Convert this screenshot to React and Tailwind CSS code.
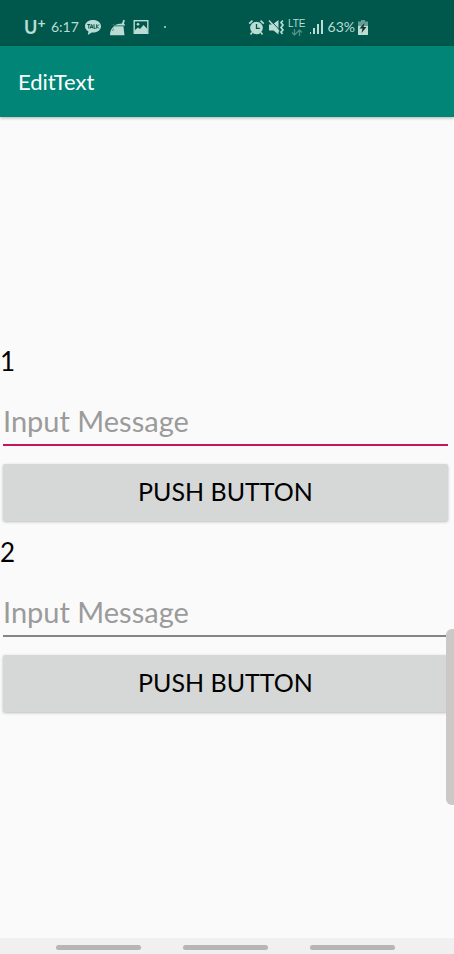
import React from 'react';

const TalkIcon = () => (
  <svg width="18" height="17" viewBox="0 0 18 17" aria-hidden="true">
    <path d="M9 1C4.400 1 1 3.700 1 7.300c0 2.300 1.400 4.100 3.500 5.200L3.800 16l3.900-2.500 1.300.1c4.600 0 8-2.700 8-6.300S13.600 1 9 1z" fill="#b9dcd5" />
    <path d="M3.300 5.500h3M4.800 5.500v4M6.200 9.500l1.400-4 1.400 4M6.700 8.300h1.800M10 5.300v4h1.700M12.700 5.300v4.200M15 5.500l-2 2 2 2" fill="none" stroke="#00574b" strokeWidth="1" />
  </svg>
);

const BroomIcon = () => (
  <svg width="17" height="17" viewBox="0 0 17 17" fill="#b9dcd5" aria-hidden="true">
    <path d="M3.500 5l2 1.200L9 5l4-.6L14.300.8l1.500.4-.9 4.100H16v1.200H5z" />
    <path d="M5 7.300h9.500l.5 5 .5 3.900H1c0-4 1.300-7 4-8.900z" />
    <path d="M4.500 9.500l-1 2.500" stroke="#00574b" strokeWidth=".6" />
  </svg>
);

const PhotoIcon = () => (
  <svg width="16" height="16" viewBox="0 0 16 16" aria-hidden="true">
    <rect x="1.200" y="1.700" width="13.600" height="12.600" fill="none" stroke="#b9dcd5" strokeWidth="1.400" />
    <circle cx="5" cy="5.300" r="1.300" fill="#b9dcd5" />
    <path d="M2 11l3-2.500 2 1.500 3.500-4L14 9.500V14H2z" fill="#b9dcd5" />
  </svg>
);

const AlarmIcon = () => (
  <svg width="17" height="17" viewBox="0 0 17 17" aria-hidden="true">
    <circle cx="8.500" cy="9" r="6.300" fill="#b9dcd5" />
    <path d="M1.200 4.600l3.300-3M15.800 4.600l-3.300-3M4 13.500l-1.500 2M13 13.500l1.500 2" stroke="#b9dcd5" strokeWidth="1.700" />
    <path d="M8.500 5v4.300h3.300" fill="none" stroke="#00574b" strokeWidth="1.300" />
  </svg>
);

const MuteIcon = () => (
  <svg width="17" height="17" viewBox="0 0 17 17" aria-hidden="true">
    <path d="M1 5.500h3.500L10.500 1v14.500L5.500 11.500H1z" fill="#b9dcd5" />
    <path d="M1.800.5l9.700 10.500" stroke="#00574b" strokeWidth="1" />
    <path d="M1 1.500l10 11" stroke="#b9dcd5" strokeWidth="1.500" />
    <path d="M15 1.500l-2 2 2 2.500-2 2.500 2 2.500-2 2 1.500 2" fill="none" stroke="#b9dcd5" strokeWidth="1.700" />
  </svg>
);

const DataArrows = () => (
  <svg width="12" height="7" viewBox="0 0 12 7" fill="none" stroke="#4c9184" strokeWidth="1.300" aria-hidden="true">
    <path d="M3.500 0v6M1 3.500L3.500 6 6 3.500M8.500 7V1M6 3.500L8.500 1 11 3.500" />
  </svg>
);

const SignalIcon = () => (
  <svg width="15" height="15" viewBox="0 0 15 15" fill="#b9dcd5" aria-hidden="true">
    <rect x="1" y="12" width="1" height="2" />
    <rect x="4" y="8" width="2" height="6" />
    <rect x="8" y="4" width="2" height="10" />
    <rect x="12" y="0" width="2" height="14" />
  </svg>
);

const BatteryIcon = () => (
  <svg width="10" height="15" viewBox="0 0 10 15" aria-hidden="true">
    <path d="M3 0h4v1.500h3V6H0V1.500h3z" fill="#669f95" />
    <path d="M0 6h10v9H0z" fill="#b9dcd5" />
    <path d="M6.500 3L1.500 8.500h3L3.500 13l5-6h-3z" fill="#12332e" />
  </svg>
);

const StatusBar = () => (
  <div className="h-[46px] shrink-0 flex items-center pt-2 pl-6 bg-[#00574b] text-[#b9dcd5] text-sm">
    <div className="flex items-center gap-[7px]">
      <span className="flex w-5 text-lg leading-5 font-bold">
        U<sup className="text-sm leading-3 top-0">+</sup>
      </span>
      <span className="w-[26px]">6:17</span>
      <TalkIcon />
      <BroomIcon />
      <PhotoIcon />
      <span className="ml-2 size-[2px] rounded-full bg-[#b9dcd5]" />
    </div>
    <div className="ml-auto mr-[86px] flex items-center gap-[3px]">
      <AlarmIcon />
      <MuteIcon />
      <div className="flex flex-col items-center gap-px text-[10px] leading-[9px] font-['Liberation_Sans',sans-serif]">
        LTE
        <DataArrows />
      </div>
      <SignalIcon />
      <span className="ml-px">63%</span>
      <BatteryIcon />
    </div>
  </div>
);

const MessageForm = ({ number, active }) => {
  const id = `message-${number}`;

  return (
    <section className="flex flex-col pb-[7px]">
      <label htmlFor={id} className="h-[45px] pt-1 text-[26px] leading-10 text-black">
        {number}
      </label>
      <input
        id={id}
        type="text"
        placeholder="Input Message"
        className={`ml-[3px] mr-[6px] h-16 mb-px pt-5 pb-1 text-[29px] text-black placeholder:text-[#9b9b9b] outline-none ${
          active ? 'border-b-2 border-[#c2185b]' : 'border-b-2 border-[#858585]'
        }`}
      />
      <button
        type="button"
        className="mt-[17px] ml-[3px] mr-[6px] h-[57px] rounded-xs bg-[#d6d8d7] text-[25px] text-black uppercase shadow-[0_1px_3px_rgba(0,0,0,0.25)]"
      >
        Push Button
      </button>
    </section>
  );
};

const App = () => {
  return (
    <div className="relative min-h-screen flex flex-col overflow-hidden bg-[#fafafa] font-['Lato',sans-serif]">
      <StatusBar />

      {/* App bar */}
      <header className="h-[71px] shrink-0 flex items-center pl-[18px] bg-[#008577] shadow-[0_1px_3px_rgba(0,0,0,0.3)]">
        <h1 className="text-[22px] text-white">EditText</h1>
      </header>

      <main className="flex-1 flex flex-col justify-center">
        <MessageForm number={1} active />
        <MessageForm number={2} />
      </main>

      {/* Edge panel handle */}
      <div className="absolute right-0 top-[629px] w-2 h-[176px] rounded-l-md bg-[#cbc8c5]" />

      {/* Gesture hints */}
      <nav className="h-4 shrink-0 flex items-center justify-center gap-[42px] pt-[3px] pr-1 bg-[#f0f0f0]">
        <button type="button" aria-label="Recent apps" className="w-[85px] h-[5px] rounded-full bg-[#b6b6b6]" />
        <button type="button" aria-label="Home" className="w-[85px] h-[5px] rounded-full bg-[#b6b6b6]" />
        <button type="button" aria-label="Back" className="w-[85px] h-[5px] rounded-full bg-[#b6b6b6]" />
      </nav>
    </div>
  );
};

export default App;
